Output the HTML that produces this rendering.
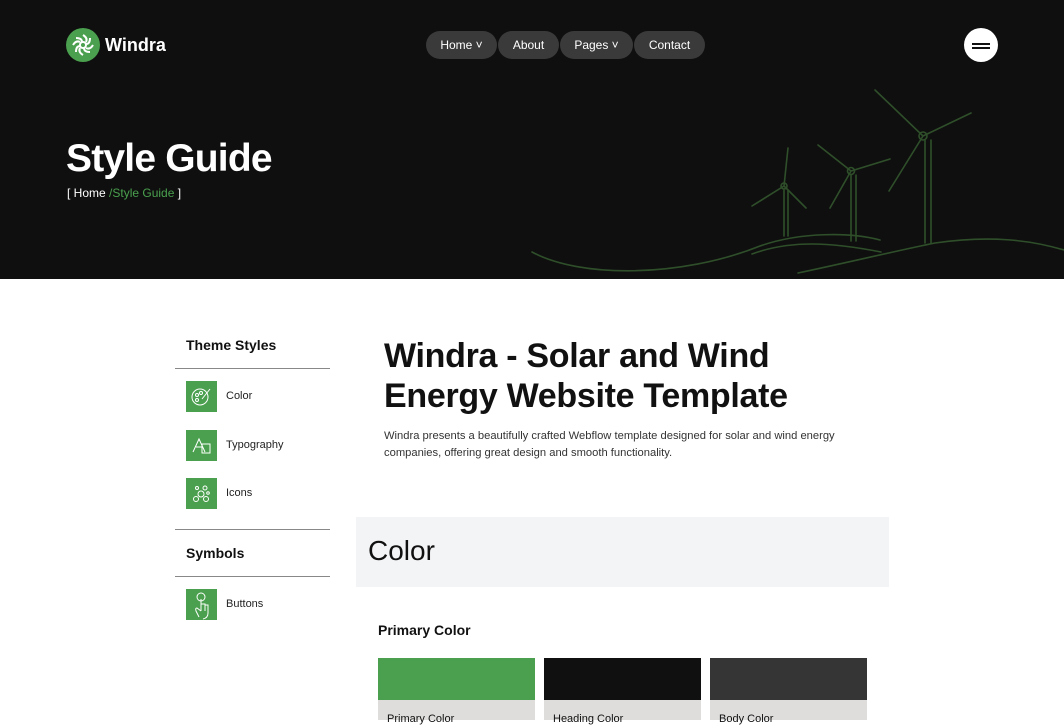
<!DOCTYPE html>
<html><head><meta charset="utf-8"><style>
*{margin:0;padding:0;box-sizing:border-box}
body{width:1064px;height:720px;overflow:hidden;background:#fff;font-family:"Liberation Sans",sans-serif;color:#111;position:relative}
.hero{position:absolute;left:0;top:0;width:1064px;height:279px;background:#0f0f0f}
.abs{position:absolute}
.nav a{position:absolute;top:31px;height:28px;border-radius:14px;background:#3a3a3a;color:#fff;font-size:12px;line-height:28px;text-align:center}
.side .item{position:absolute;left:186px;width:31px;height:31px;background:#4aa04e}
.side .lbl{position:absolute;left:226px;font-size:11px;color:#222}
.hr{position:absolute;left:175px;width:155px;height:1px;background:#888}
</style></head><body>
<div class="hero">
<svg class="abs" style="left:0;top:0" width="1064" height="279">
<g fill="none" stroke="#2f4f2a" stroke-width="1.6" stroke-linecap="round">
<path d="M532 252 C580 278,680 278,760 246 C800 232,850 232,880 240"/>
<path d="M752 254 C790 240,830 242,881 252"/>
<path d="M798 273 C850 262,900 250,935 243 C990 235,1030 240,1064 250"/>
<path d="M923 136 L875 90 M923 136 L971 113 M923 136 L889 191"/>
<path d="M925 140 L925 243 M931 140 L931 243"/>
<circle cx="923" cy="136" r="4"/>
<path d="M851 171 L818 145 M851 171 L890 159 M851 171 L830 208"/>
<path d="M851 175 L851 241 M856 175 L856 241"/>
<circle cx="851" cy="171" r="3.5"/>
<path d="M784 186 L788 148 M784 186 L752 206 M784 186 L806 208"/>
<path d="M784 190 L784 236 M788 190 L788 236"/>
<circle cx="784" cy="186" r="3"/>
</g></svg>
<div class="abs" style="left:66px;top:28px;width:34px;height:34px;border-radius:50%;background:#4aa04e"><svg width="34" height="34"><g stroke="#fff" stroke-width="2" fill="none"><circle cx="17" cy="17" r="3"/><path d="M17 7 Q22 10 20 14 M27 17 Q24 22 20 20 M17 27 Q12 24 14 20 M7 17 Q10 12 14 14 M24 10 Q24 16 20 16 M24 24 Q18 24 18 20 M10 24 Q10 18 14 18 M10 10 Q16 10 16 14"/></g></svg></div>
<div class="abs" style="left:105px;top:35px;font-size:18px;color:#fff;font-weight:bold">Windra</div>
<div class="nav">
<a style="left:426px;width:71px">Home ˅</a>
<a style="left:498px;width:61px">About</a>
<a style="left:560px;width:73px">Pages ˅</a>
<a style="left:634px;width:71px">Contact</a>
</div>
<div class="abs" style="left:964px;top:28px;width:34px;height:34px;border-radius:50%;background:#fff"><div class="abs" style="left:8px;top:15px;width:18px;height:2px;background:#111"></div><div class="abs" style="left:8px;top:19px;width:18px;height:2px;background:#111"></div></div>
<div class="abs" style="left:66px;top:137px;font-size:39px;font-weight:bold;color:#fff;letter-spacing:-0.8px">Style Guide</div>
<div class="abs" style="left:67px;top:186px;font-size:12px;color:#fff">[ Home <span style="color:#4aa04e">/Style Guide</span> ]</div>
</div>
<div class="side">
<div class="abs" style="left:186px;top:337px;font-size:14px;font-weight:bold">Theme Styles</div>
<div class="hr" style="top:368px"></div>
<div class="item" style="top:381px"><svg width="31" height="31" fill="none" stroke="#fff" stroke-width="1"><circle cx="14" cy="16" r="8"/><circle cx="11" cy="14" r="1.5"/><circle cx="15" cy="12" r="1.5"/><circle cx="11" cy="19" r="1.5"/><path d="M16 18 L24 8"/></svg></div><div class="lbl" style="top:390px">Color</div>
<div class="item" style="top:430px"><svg width="31" height="31" fill="none" stroke="#fff" stroke-width="1"><path d="M7 22 L13 9 L19 22 M10 17 H16"/><rect x="16" y="14" width="8" height="9"/></svg></div><div class="lbl" style="top:439px">Typography</div>
<div class="item" style="top:478px"><svg width="31" height="31" fill="none" stroke="#fff" stroke-width="1"><circle cx="11" cy="10" r="1.5"/><circle cx="19" cy="10" r="2"/><circle cx="15" cy="16" r="3"/><circle cx="10" cy="21" r="2.5"/><circle cx="20" cy="21" r="2.5"/><circle cx="22" cy="15" r="1.3"/></svg></div><div class="lbl" style="top:487px">Icons</div>
<div class="hr" style="top:529px"></div>
<div class="abs" style="left:186px;top:545px;font-size:14px;font-weight:bold">Symbols</div>
<div class="hr" style="top:576px"></div>
<div class="item" style="top:589px"><svg width="31" height="31" fill="none" stroke="#fff" stroke-width="1"><circle cx="15" cy="8" r="4"/><path d="M15 10 V22 M15 15 H19 V22 M19 16 H22 V24 Q22 29 17 30 M15 22 L11 19 Q9 19 10 22 L13 28"/></svg></div><div class="lbl" style="top:598px">Buttons</div>
</div>
<div class="abs" style="left:384px;top:336px;font-size:34px;font-weight:bold;line-height:40px;letter-spacing:-0.3px">Windra - Solar and Wind<br>Energy Website Template</div>
<div class="abs" style="left:384px;top:428px;font-size:11.2px;line-height:17px;color:#333;width:490px">Windra presents a beautifully crafted Webflow template designed for solar and wind energy companies, offering great design and smooth functionality.</div>
<div class="abs" style="left:356px;top:517px;width:533px;height:70px;background:#f3f4f6"><div class="abs" style="left:12px;top:18px;font-size:28px">Color</div></div>
<div class="abs" style="left:378px;top:622px;font-size:14px;font-weight:bold">Primary Color</div>
<div class="abs" style="left:378px;top:658px;width:157px;height:42px;background:#4aa04e"></div>
<div class="abs" style="left:544px;top:658px;width:157px;height:42px;background:#101010"></div>
<div class="abs" style="left:710px;top:658px;width:157px;height:42px;background:#353535"></div>
<div class="abs" style="left:378px;top:700px;width:157px;height:20px;background:#dedddc"><div class="abs" style="left:9px;top:13px;font-size:11px">Primary Color</div></div>
<div class="abs" style="left:544px;top:700px;width:157px;height:20px;background:#dedddc"><div class="abs" style="left:9px;top:13px;font-size:11px">Heading Color</div></div>
<div class="abs" style="left:710px;top:700px;width:157px;height:20px;background:#dedddc"><div class="abs" style="left:9px;top:13px;font-size:11px">Body Color</div></div>
</body></html>
